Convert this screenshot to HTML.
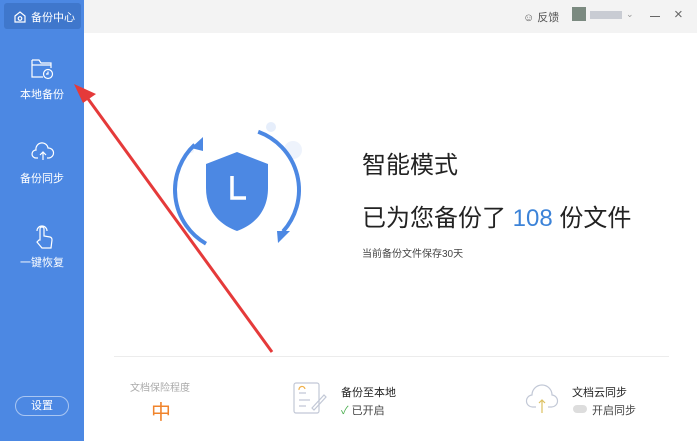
<!DOCTYPE html>
<html><head><meta charset="utf-8"><style>
*{margin:0;padding:0;box-sizing:border-box}
body{width:697px;height:441px;overflow:hidden;background:#fff;font-family:"Liberation Sans","Noto Sans CJK SC",sans-serif;position:relative}
.side{position:absolute;left:0;top:0;width:84px;height:441px;background:#4c88e3}
.top{position:absolute;left:84px;top:0;right:0;height:33px;background:#f3f3f3}
.t{position:absolute;white-space:nowrap}
.nav{position:absolute;left:0;width:84px;text-align:center;color:#fff;font-size:11px}
</style></head><body>
<div class="side"></div>
<div style="position:absolute;left:4px;top:3px;width:77px;height:26px;background:#3f77cc;border-radius:3px"></div>
<svg style="position:absolute;left:13px;top:10px" width="14" height="14" viewBox="0 0 14 14" fill="none" stroke="#fff" stroke-width="1.2"><path d="M2 6L7 2L12 6V12H2Z"/><circle cx="7" cy="8.5" r="1.8"/></svg>
<div class="t" style="left:31px;top:9px;color:#fff;font-size:11px">备份中心</div>
<svg style="position:absolute;left:31px;top:58px" width="24" height="22" viewBox="0 0 24 22" fill="none" stroke="#fff" stroke-width="1.2"><path d="M1 2H8L10 5H20V10M1 2V19H12"/><path d="M1 7H20"/><circle cx="17" cy="16" r="4.5"/><path d="M17 13.5V16H15"/></svg>
<div class="nav" style="top:86px">本地备份</div>
<svg style="position:absolute;left:31px;top:142px" width="24" height="20" viewBox="0 0 24 20" fill="none" stroke="#fff" stroke-width="1.2"><path d="M7 16H5A4 4 0 0 1 5 8A6 6 0 0 1 17 6A5 5 0 0 1 18 16H16"/><path d="M12 18V10M9 13L12 10L15 13"/></svg>
<div class="nav" style="top:170px">备份同步</div>
<svg style="position:absolute;left:33px;top:224px" width="22" height="26" viewBox="0 0 22 26" fill="none" stroke="#fff" stroke-width="1.2"><path d="M7 16V5A2 2 0 0 1 11 5V12L17 13A3 3 0 0 1 19 16L18 24H9L4 18L6 16Z"/><path d="M4 7A5 5 0 0 1 14 7"/></svg>
<div class="nav" style="top:254px">一键恢复</div>
<div style="position:absolute;left:15px;top:396px;width:54px;height:20px;border:1px solid #a9c6f2;border-radius:10px;color:#fff;font-size:11px;text-align:center;line-height:18px">设置</div>
<div class="top"></div>
<div class="t" style="left:523px;top:9px;font-size:11px;color:#555">☺ 反馈</div>
<div style="position:absolute;left:572px;top:7px;width:14px;height:14px;background:#7b8a80"></div>
<div style="position:absolute;left:590px;top:11px;width:32px;height:8px;background:#c9ccd3"></div>
<div class="t" style="left:626px;top:9px;font-size:9px;color:#999">⌄</div>
<div style="position:absolute;left:650px;top:16px;width:10px;height:1px;background:#666"></div>
<div class="t" style="left:674px;top:6px;font-size:15px;color:#666">×</div>
<svg style="position:absolute;left:165px;top:110px" width="150" height="160" viewBox="0 0 150 160">
<circle cx="106" cy="17" r="5" fill="#e6eefb"/><circle cx="128" cy="40" r="9" fill="#eef3fc"/><circle cx="26" cy="40" r="3" fill="#eef3fc"/>
<path d="M29.7 34.7A62 62 0 0 0 41 133.7" fill="none" stroke="#4c88e3" stroke-width="4"/>
<path d="M93.2 21.7A62 62 0 0 1 118 121.5" fill="none" stroke="#4c88e3" stroke-width="4"/>
<path d="M26 38L38 27V41Z" fill="#4c88e3"/><path d="M112 121H125L113 133Z" fill="#4c88e3"/>
<path d="M72 42L103 54V78C103 104 86 116 72 121C58 116 41 104 41 78V54Z" fill="#4c88e3"/>
<path d="M67 66V88H81" fill="none" stroke="#fff" stroke-width="3.5"/>
</svg>
<div class="t" style="left:362px;top:145px;font-size:24px;color:#222">智能模式</div>
<div class="t" style="left:362px;top:198px;font-size:24px;color:#222">已为您备份了 <span style="color:#3c83d8">108</span> 份文件</div>
<div class="t" style="left:362px;top:245px;font-size:10px;color:#444">当前备份文件保存30天</div>
<svg style="position:absolute;left:0;top:0" width="697" height="441"><path d="M272 352L86 96" stroke="#e53a3a" stroke-width="3"/><path d="M74 84L96 94L83 103Z" fill="#e53a3a"/></svg>
<div style="position:absolute;left:114px;top:356px;width:555px;height:1px;background:#ececec"></div>
<div class="t" style="left:130px;top:379px;font-size:10px;color:#aaa">文档保险程度</div>
<div class="t" style="left:151px;top:396px;font-size:20px;color:#f0842c">中</div>
<svg style="position:absolute;left:292px;top:381px" width="36" height="34" viewBox="0 0 36 34" fill="none" stroke="#c2c8d6" stroke-width="1.2"><rect x="2" y="2" width="25" height="30" rx="2"/><path d="M7 12H14M7 19H18M7 25H14M20 27L32 14L34 16L22 29Z"/><path d="M7 9A3 3 0 0 1 13 8" stroke="#f0b04a"/></svg>
<div class="t" style="left:341px;top:384px;font-size:11px;color:#222">备份至本地</div>
<div class="t" style="left:341px;top:402px;font-size:11px;color:#444"><span style="color:#4caf50">✓</span> 已开启</div>
<svg style="position:absolute;left:525px;top:383px" width="34" height="32" viewBox="0 0 34 32" fill="none" stroke="#c2c8d6" stroke-width="1.2"><path d="M11 24H8A6 6 0 0 1 7 12A10 10 0 0 1 27 12A6 6 0 0 1 26 24H23"/><path d="M17 30V17M14 20L17 17L20 20" stroke="#dcc060"/></svg>
<div class="t" style="left:572px;top:384px;font-size:11px;color:#222">文档云同步</div>
<div style="position:absolute;left:573px;top:405px;width:14px;height:8px;border-radius:4px;background:#ddd"></div>
<div class="t" style="left:592px;top:402px;font-size:11px;color:#444">开启同步</div>
</body></html>
